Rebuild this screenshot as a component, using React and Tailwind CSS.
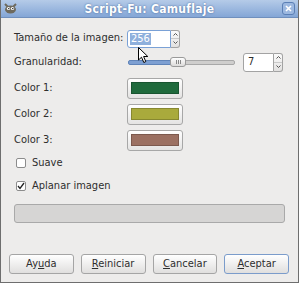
import React from "react";

const font = { fontFamily: '"DejaVu Sans Condensed", "DejaVu Sans", sans-serif' };

function SpinButtons() {
  return (
    <div className="flex flex-col w-[9px] h-full border border-[#a3a3a3] rounded-r-[3px] bg-gradient-to-b from-[#fbfbfb] to-[#e2e1e0] border-l-0">
      <div className="flex-1 flex items-center justify-center border-b border-[#c9c9c9]">
        <svg width="5" height="3" viewBox="0 0 5 3"><path d="M0.5 2.5 L2.5 0.5 L4.5 2.5" stroke="#555" fill="none" strokeWidth="1" /></svg>
      </div>
      <div className="flex-1 flex items-center justify-center">
        <svg width="5" height="3" viewBox="0 0 5 3"><path d="M0.5 0.5 L2.5 2.5 L4.5 0.5" stroke="#555" fill="none" strokeWidth="1" /></svg>
      </div>
    </div>
  );
}

function ColorButton({ color }) {
  return (
    <div className="w-[56px] h-[21px] rounded-[3px] border border-[#a7a7a7] bg-gradient-to-b from-white to-[#e4e3e2] pt-[3px] pl-[3px] pr-[3px]">
      <div className="h-[12px] border border-black/20" style={{ backgroundColor: color }} />
    </div>
  );
}

function Check({ checked, label }) {
  return (
    <div className="h-[20px] flex items-center pl-[15px]">
      <div className="w-[10px] h-[10px] bg-white border border-[#8c8c8c] rounded-[2px] flex items-center justify-center">
        {checked && (
          <svg width="8" height="8" viewBox="0 0 8 8"><path d="M1 4 L3 6.5 L7 1" stroke="#222" strokeWidth="1.3" fill="none" /></svg>
        )}
      </div>
      <span className="ml-[6px]">{label}</span>
    </div>
  );
}

function Btn({ pre, u, post, active }) {
  return (
    <div className={`h-[20px] rounded-[3px] border bg-gradient-to-b from-white to-[#e0dfde] flex items-center justify-center ${active ? "border-[#7b9ccb]" : "border-[#a5a5a5]"}`}>
      <span>{pre}<span className="underline underline-offset-1">{u}</span>{post}</span>
    </div>
  );
}

export default function App() {
  return (
    <div className="relative w-[299px] h-[283px] bg-[#edeceb] border-x border-b border-[#6e6e6e] text-[11px] text-[#2e2e2e] overflow-hidden" style={font}>
      {/* title bar */}
      <div className="h-[18px] -mx-px bg-gradient-to-b from-[#b5cbe8] to-[#84a6d6] border-b border-[#6f8fbd] flex items-center px-[4px] relative">
        <svg width="13" height="11" viewBox="0 0 13 11" className="mt-[-1px]">
          <ellipse cx="6.5" cy="6.5" rx="5.5" ry="4" fill="#6e6a5e" />
          <path d="M1 1 L4 4 M12 1 L9 4" stroke="#6e6a5e" strokeWidth="2" />
          <circle cx="4.5" cy="5.5" r="1.6" fill="#fff" />
          <circle cx="8.5" cy="5.5" r="1.6" fill="#fff" />
          <circle cx="4.8" cy="5.6" r="0.7" fill="#000" />
          <circle cx="8.8" cy="5.6" r="0.7" fill="#000" />
        </svg>
        <div className="flex-1 text-center font-bold text-white text-[12px] tracking-[0.3px] [text-shadow:0_0_2px_#3d5f93]">Script-Fu: Camuflaje</div>
        <div className="w-[13px] h-[13px] rounded-[3px] border border-[#5b7fb5] bg-[#9cb8e0] flex items-center justify-center">
          <svg width="7" height="7" viewBox="0 0 7 7"><path d="M1 1 L6 6 M6 1 L1 6" stroke="#fff" strokeWidth="1.6" /></svg>
        </div>
      </div>

      <div className="pt-[11px] px-[13px]">
        {/* image size */}
        <div className="h-[19px] flex items-center">
          <div className="w-[113px] shrink-0">Tamaño de la imagen:</div>
          <div className="flex h-[18px]">
            <div className="w-[44px] bg-white border border-[#7aa1d6] rounded-l-[3px] flex items-center pl-[2px]">
              <span className="bg-[#8fb0dc] text-white px-px leading-[12px]">256</span>
            </div>
            <SpinButtons />
          </div>
        </div>

        {/* granularity */}
        <div className="h-[20px] mt-[4px] flex items-center">
          <div className="w-[114px] shrink-0">Granularidad:</div>
          <div className="w-[107px] h-[5px] relative flex items-center">
            <div className="w-[43px] h-[5px] bg-[#7d9fd2] border border-[#5f83b8] rounded-l-[2px]" />
            <div className="flex-1 h-[5px] bg-[#cfcecd] border border-[#a8a8a8] rounded-r-[2px]" />
            <div className="absolute left-[42px] top-[-3px] w-[16px] h-[10px] rounded-[3px] border border-[#9a9a9a] bg-gradient-to-b from-white to-[#dcdbda] flex items-center justify-center gap-[1px]">
              <div className="w-px h-[4px] bg-[#888]" />
              <div className="w-px h-[4px] bg-[#888]" />
              <div className="w-px h-[4px] bg-[#888]" />
            </div>
          </div>
          <div className="flex h-[19px] ml-[8px]">
            <div className="w-[31px] bg-white border border-[#a3a3a3] rounded-l-[3px] flex items-center pl-[4px]">7</div>
            <SpinButtons />
          </div>
        </div>

        {/* colors */}
        <div className="h-[21px] mt-[6px] flex items-center">
          <div className="w-[113px]">Color 1:</div>
          <ColorButton color="#1f6a3c" />
        </div>
        <div className="h-[21px] mt-[5px] flex items-center">
          <div className="w-[113px]">Color 2:</div>
          <ColorButton color="#a9aa3c" />
        </div>
        <div className="h-[21px] mt-[5px] flex items-center">
          <div className="w-[113px]">Color 3:</div>
          <ColorButton color="#9b7062" />
        </div>
      </div>

      <div className="mt-[2px]">
        <Check label="Suave" />
      </div>
      <div className="mt-[3px]">
        <Check checked label="Aplanar imagen" />
      </div>

      <div className="mx-[13px] mt-[8px] h-[19px] bg-[#d6d5d4] border border-[#a9a9a9] rounded-[3px]" />

      <div className="mt-[31px] pl-[8px] pr-[9px] grid grid-cols-4 gap-[7px]">
        <Btn pre="Ay" u="u" post="da" />
        <Btn pre="" u="R" post="einiciar" />
        <Btn pre="" u="C" post="ancelar" />
        <Btn pre="" u="A" post="ceptar" active />
      </div>

      {/* mouse pointer */}
      <svg className="absolute left-[137px] top-[47px]" width="11" height="17" viewBox="0 0 11 17">
        <path d="M0.5 0.5 L0.5 13 L3.5 10.2 L5.8 15.5 L7.8 14.6 L5.6 9.5 L9.8 9.5 Z" fill="#fff" stroke="#000" strokeWidth="1" strokeLinejoin="round" />
      </svg>
    </div>
  );
}
